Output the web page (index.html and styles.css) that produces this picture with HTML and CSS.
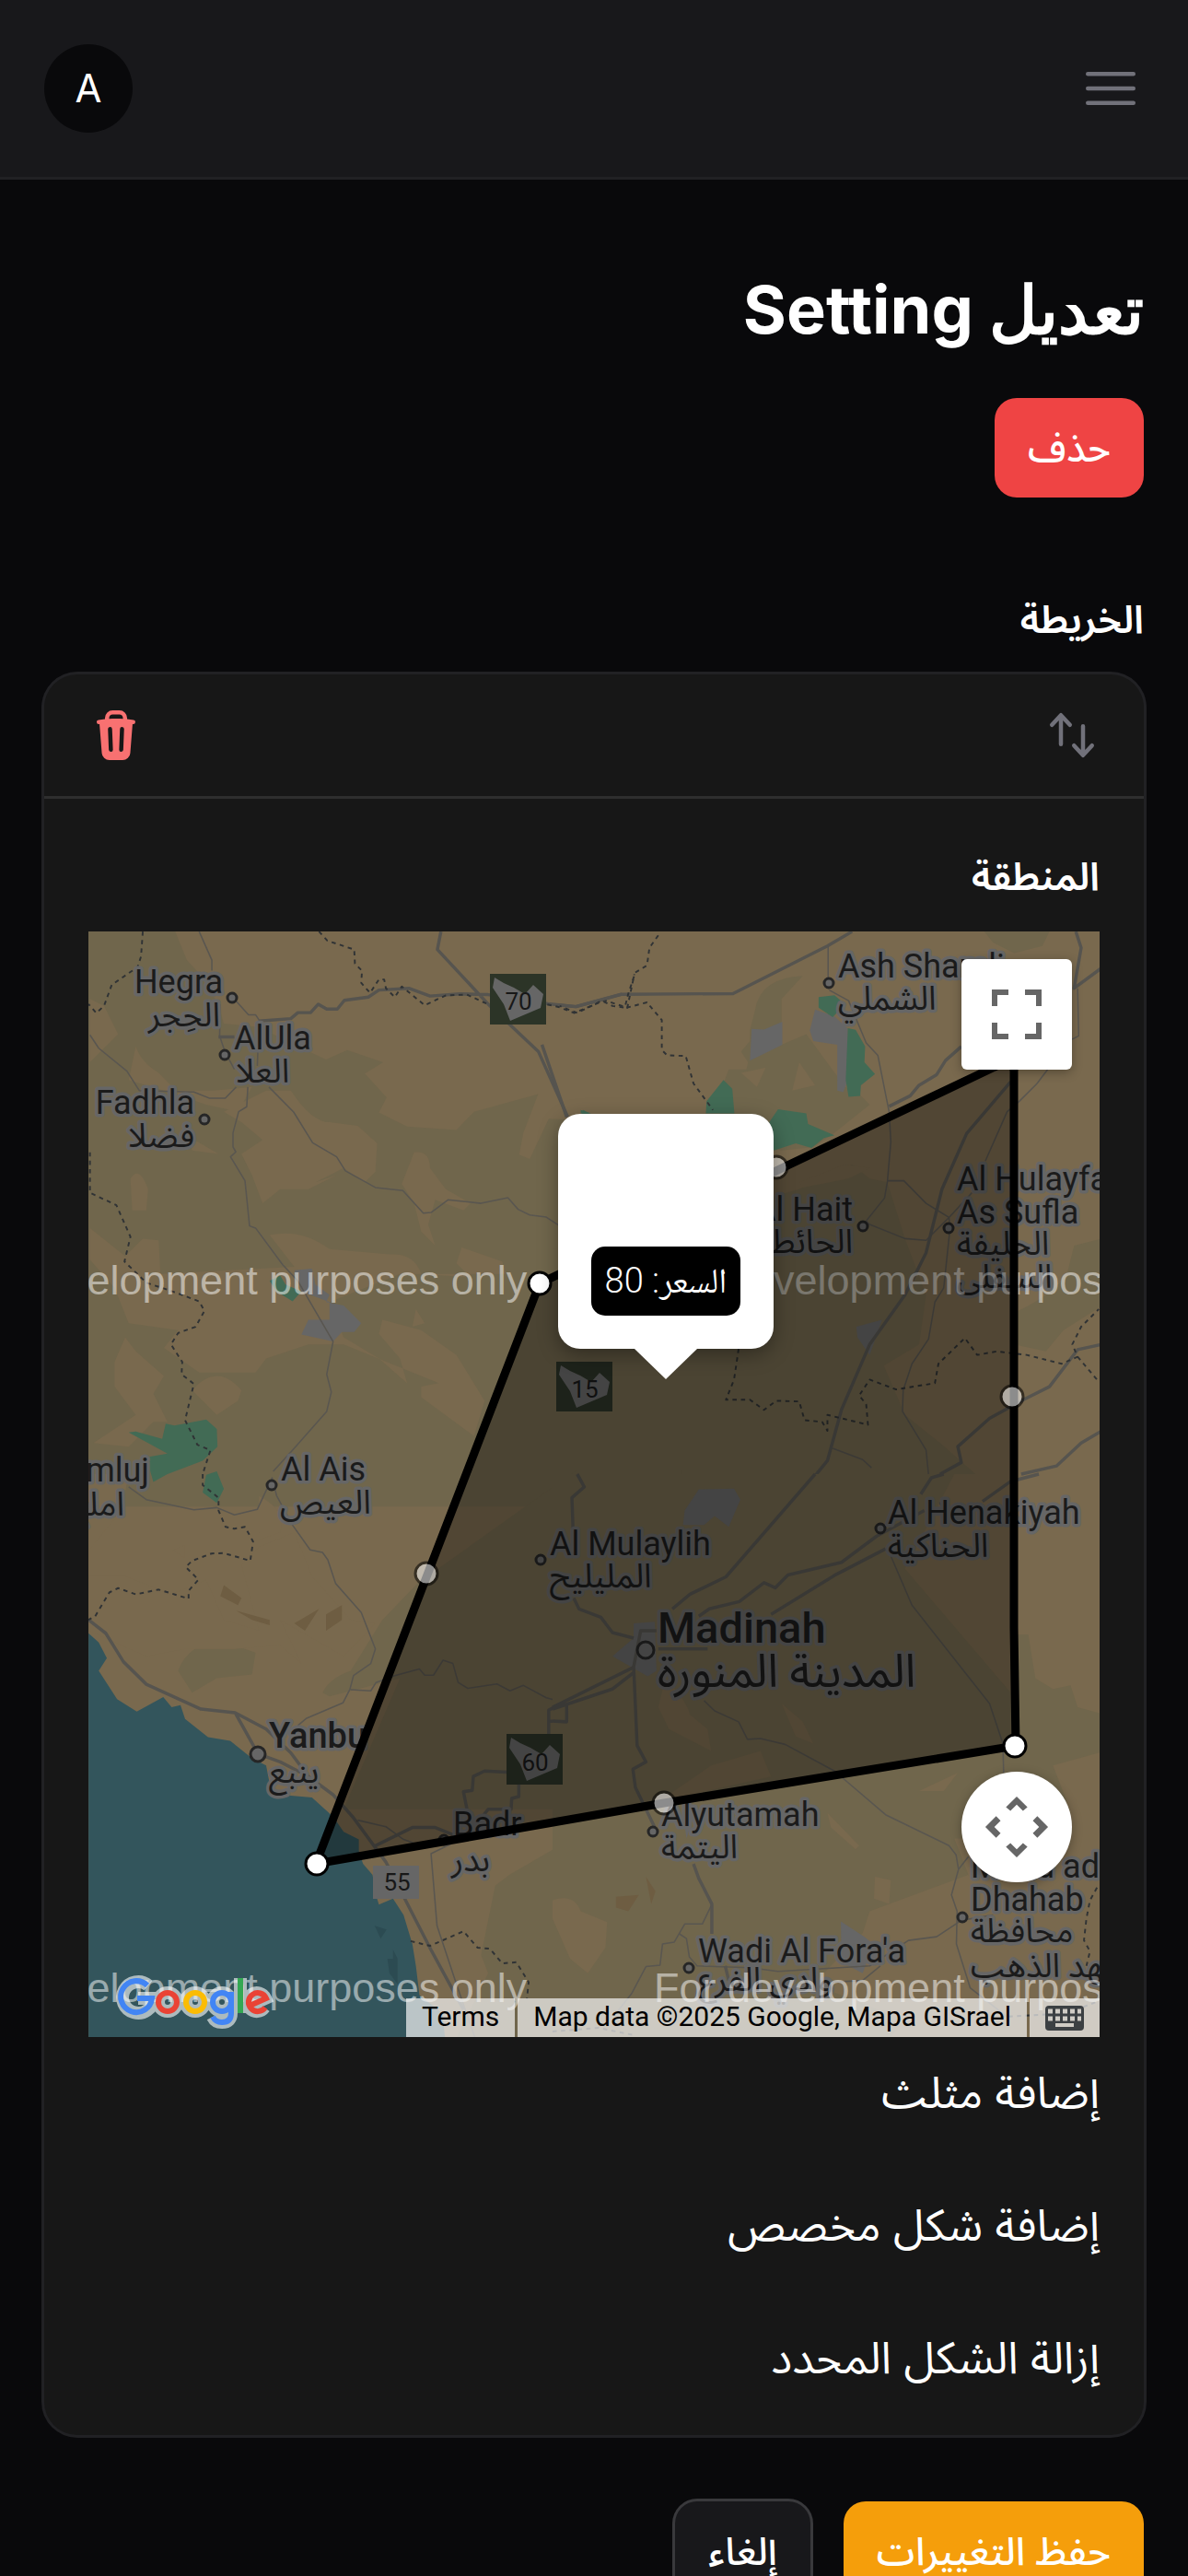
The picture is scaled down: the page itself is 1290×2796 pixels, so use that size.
FILE: index.html
```html
<!DOCTYPE html>
<html lang="ar" dir="rtl">
<head>
<meta charset="utf-8">
<meta name="viewport" content="width=device-width, initial-scale=1">
<title>تعديل Setting</title>
<link rel="stylesheet" href="styles.css">
</head>
<body>
<header class="topbar">
  <button class="icon-button menu-button" type="button" aria-label="القائمة">
    <svg class="icon-lg" viewBox="0 0 24 24" fill="none" stroke="currentColor" stroke-width="1.5" stroke-linecap="round"><path d="M3.75 6.75h16.5M3.75 12h16.5M3.75 17.25h16.5"/></svg>
  </button>
  <button class="avatar" type="button">A</button>
</header>
<main class="page">
  <div class="page-header">
    <h1 class="title">تعديل Setting</h1>
    <button class="btn btn-danger" type="button">حذف</button>
  </div>
  <form class="form">
    <section class="field">
      <h2 class="label">الخريطة</h2>
      <div class="card">
        <div class="card-header">
          <button class="icon-button" type="button" aria-label="نقل">
            <svg class="icon-sm" viewBox="0 0 20 20" fill="currentColor"><path fill-rule="evenodd" d="M2.24 6.8a.75.75 0 0 0 1.06-.04l1.95-2.1v8.59a.75.75 0 0 0 1.5 0V4.66l1.95 2.1a.75.75 0 1 0 1.1-1.02l-3.25-3.5a.75.75 0 0 0-1.1 0L2.2 5.74a.75.75 0 0 0 .04 1.06Zm8 6.4a.75.75 0 0 0-.04 1.06l3.25 3.5a.75.75 0 0 0 1.1 0l3.25-3.5a.75.75 0 1 0-1.1-1.02l-1.95 2.1V6.75a.75.75 0 0 0-1.5 0v8.59l-1.95-2.1a.75.75 0 0 0-1.06-.04Z" clip-rule="evenodd"/></svg>
          </button>
          <button class="icon-button icon-danger" type="button" aria-label="حذف العنصر">
            <svg class="icon-sm" viewBox="0 0 20 20" fill="currentColor"><path fill-rule="evenodd" d="M8.75 1A2.75 2.75 0 0 0 6 3.75v.443c-.795.077-1.584.176-2.365.298a.75.75 0 1 0 .23 1.482l.149-.022.841 10.518A2.75 2.75 0 0 0 7.596 19h4.807a2.75 2.75 0 0 0 2.742-2.53l.841-10.52.149.023a.75.75 0 0 0 .23-1.482A41.03 41.03 0 0 0 14 4.193V3.75A2.75 2.75 0 0 0 11.25 1h-2.5ZM10 4c.84 0 1.673.025 2.5.075V3.75c0-.69-.56-1.25-1.25-1.25h-2.5c-.69 0-1.25.56-1.25 1.25v.325C8.327 4.025 9.16 4 10 4ZM8.58 7.72a.75.75 0 0 0-1.5.06l.3 7.5a.75.75 0 1 0 1.5-.06l-.3-7.5Zm4.34.06a.75.75 0 1 0-1.5-.06l-.3 7.5a.75.75 0 1 0 1.5.06l.3-7.5Z" clip-rule="evenodd"/></svg>
          </button>
        </div>
        <div class="card-body">
          <h3 class="label">المنطقة</h3>
          <div class="map">
            <svg class="map-canvas" viewBox="0 0 1098 1200" preserveAspectRatio="xMidYMid slice" role="img" aria-label="خريطة المدينة المنورة">
              <rect class="sand" width="1098" height="1200"/>
              <!-- north-west -->
              <g transform="translate(-6 -11) scale(.38265)">
                <path class="olive" d="M16 29H262L295 110 350 170 385 240 400 290 500 300 600 350 690 392 750 365 852 400 800 432 862 500 840 542 920 582 1060 592 1110 540 1292 490 1250 600 1238 662 1268 674 1322 560 1500 570V1660H16Z"/>
                <path class="sand" d="M150 355Q165 400 215 430L265 480 370 480 480 470 440 540 350 520 290 500 230 480 130 450ZM20 220 60 240 100 320 20 400ZM590 480Q650 570 700 570L780 580 835 630 830 710 800 740 740 700 660 740 720 720 640 760 560 760 510 800 480 720 450 660 510 620 450 570 400 540 520 480ZM300 610 385 660 310 650ZM940 655Q985 650 985 700L1030 760 1100 800 1080 820 1000 790 980 860 1000 920 960 880 940 800 905 745ZM135 730Q160 690 185 760L180 820 140 820ZM530 890Q620 870 700 930L870 945Q940 940 960 1000L1100 1010 1060 970 1075 925 1190 965 1200 1000 900 1000 700 1080 740 1180 840 1240 920 1310 900 1240 840 1170 850 1130 960 1160 1060 1230 1140 1360 1110 1460 960 1350 960 1320 1010 1310 740 1200 640 1200 520 1240 490 1280 330 1280 230 1210 270 1160 130 1140 90 1040 20 960V870L120 950 170 900 215 905 220 1000 600 980ZM120 1180 90 1250 90 1320 150 1400 30 1480 130 1490 200 1420 240 1420 200 1340 230 1290 150 1220ZM310 1330Q380 1250 450 1330L440 1360 380 1400ZM945 1100 970 1140 935 1150Z"/>
                <path class="urban" d="M600 990 650 985 660 1030 700 1060 690 1080 740 1090 790 1140 770 1165 735 1165 710 1192 620 1172 640 1130 700 1130 700 1080 620 1050Z"/>
                <path class="park" d="M530 1020 560 1005 575 1030 620 1050 595 1078 550 1050ZM130 1450 150 1447 225 1468 235 1425 260 1430 350 1413 380 1440 382 1490 340 1530 240 1568 200 1590 180 1520 240 1510ZM350 1570 380 1560 400 1610 380 1650 340 1620ZM1415 550 1420 535 1445 550Z"/>
                <path class="road-minor" d="M330 29 366 110 366 140M425 215 470 265 490 265 500 280M390 235 388 325 403 370 430 420M500 280 495 410M20 322 45 360 125 425 160 480 315 484 360 502 404 502 435 470M468 470 465 526 442 540 426 600 426 640 434 654 419 668 460 736 473 864 490 870 567 974 610 1020 710 1192 692 1285 705 1335 692 1390 595 1500 540 1560M528 470 598 541 652 628 720 668 745 708 830 755 908 764 966 828 988 826 1036 790 1130 800 1206 784 1235 817 1268 833 1315 839 1400 895"/>
                <path class="road" d="M385 328H430M500 283 590 276 610 259 646 259 668 235 692 249 722 249 742 224 810 215 840 195 925 190 985 212 1070 206 1150 208 1320 234 1400 242 1530 207M1016 29 1006 80 1155 240 1293 370 1376 555M1400 1210 1415 1389 1385 1515 1415 1625 1385 1660 1390 1760"/>
                <path class="border" d="M170 29 165 100 155 130 82 180 60 240 38 260 16 235M670 29 694 55 770 80 772 120 792 140 790 175 815 203 840 165 855 165 860 190 885 215 905 185 970 238 1030 210 1090 208 1160 240M1318 236 1350 243 1395 260 1480 224 1545 245 1565 150M20 655 20 770 95 805 135 895 118 965 180 1025 255 1050 330 1078 345 1105 320 1150 270 1168 250 1200 282 1250 280 1285 315 1312 290 1415 325 1485 362 1500 340 1568"/>
              </g>
              <!-- north-east -->
              <g transform="translate(504 -11) scale(.38265)">
                <path class="olive" d="M710 155Q590 160 575 250L560 310 560 340 535 370 555 400 550 420 500 420 470 500 480 600 650 650 740 640 800 600 900 520 870 490 830 470 720 320 650 350 650 220ZM1225 29H1410L1390 70 1310 90 1250 60ZM500 930 560 800 700 760 850 690 900 730 950 740 1000 900 1060 1060 1040 1200 940 1260 1000 1400 1100 1480 1200 1568H0V930ZM1310 1110Q1420 1060 1460 1000L1480 920 1560 900V1090L1450 1160 1400 1220 1310 1200Z"/>
                <path class="sand" d="M535 430 605 415 580 470ZM700 400 745 465 680 480ZM700 740 830 690 900 700 840 730 710 755Z"/>
                <path class="urban" d="M565 305 600 307 652 285 652 350 560 395ZM745 250 800 270 838 305 838 450 825 485 808 480 808 350 740 340 730 310ZM862 1150 935 1130 900 1230 865 1180Z"/>
                <path class="park" d="M755 215 800 210 830 235 795 272 755 245ZM838 303 860 308 887 355 885 400 915 433 875 465 873 495 840 498 832 450ZM485 450 510 475 516 545 435 545 437 510ZM640 533 720 545 725 575 800 607 770 615 735 643 690 630 628 650 615 570ZM80 535 110 545H80Z"/>
                <path class="road-minor" d="M782 70V160M785 195 840 225 890 345 923 380 955 540 960 625 950 740 942 785 890 850 900 860 1000 900 1060 905 1125 840 1128 870 1110 1040 1085 1080 1067 1185 1020 1255 995 1330 993 1390 1060 1500 1070 1600 1110 1670M950 736 997 736 1060 800 1125 840 1190 770M1405 420 1375 460 1325 510 1290 540 1228 680M1490 190 1493 325 1474 335M795 1495 880 1527 905 1550"/>
                <path class="road" d="M-30 350 40 555M20 238 65 242 195 207 512 205 780 70 850 29M1485 29 1500 75 1480 190 1568 125M955 525 1015 495 1040 465 1090 435 1115 395 1160 355M1300 455 1175 602 1105 760 1060 940 1000 1060 900 1200 820 1385 780 1530 650 1690 492 1875 340 1960M1568 1198 1490 1215 1410 1320 1340 1355 1240 1410 1150 1490 1160 1535 1100 1568M1568 1440 1500 1480 1430 1545 1330 1568"/>
                <path class="border" d="M300 40 275 75 268 125 235 145 215 205 205 245 170 240 140 225 70 260 20 240M210 245 268 230 310 280 310 365 325 380 378 382 400 460 455 535M528 1213 515 1300 492 1357 560 1357 600 1386 635 1360 700 1362 715 1415 765 1420 780 1445 780 1400 895 1428 890 1370 870 1345 900 1300 975 1328 1085 1310 1095 1255 1170 1182 1205 1230 1260 1220 1345 1230 1445 1255 1490 1235 1475 1200 1500 1150 1550 1100M1490 1235 1545 1300"/>
              </g>
              <!-- south-west -->
              <g transform="translate(-6 589) scale(.38265 .3954)">
                <path class="olive" d="M270 540Q300 460 400 460L490 490 480 550 380 560 310 600ZM680 600Q700 560 760 540L850 400 950 300 1400 -10H1700V920H740L900 560 700 610ZM1170 1130 1210 1100 1568 900V1568H1050L1150 1370 1130 1320Z"/>
                <path class="sand" d="M16 0H130L110 100 16 210ZM16 280 120 280 250 330 350 290 400 400 500 430 450 250 500 200 600 160 650 280 760 400 830 410 740 500 560 400 620 520 560 470 430 480 290 480 180 500 16 430ZM500 60Q580 100 560 160L500 180ZM255 210 290 195 290 230ZM1350 1170 1400 1165 1440 1210 1560 1190 1420 1300 1420 1370 1340 1260Z"/>
                <path class="ridge" d="M400 305 450 340 440 360 390 335ZM435 375 530 400 530 415 480 400ZM690 385 735 360 735 400 690 430ZM600 410 670 370 630 430Z"/>
                <path class="sea" d="M16 437 45 462 68 505 45 540 97 618 153 652 228 612 252 640 277 634 290 672 355 722 418 732 480 780 520 800 530 850 560 880 650 888 710 940 740 982 783 1003 783 1035 795 1070 822 1100 830 1150 840 1182 880 1165 910 1210 935 1290 945 1350 955 1430 1020 1480 1030 1568H16Z"/>
                <path class="shoal" d="M828 1240 862 1250 845 1275ZM880 1305 893 1330 893 1400 870 1370 864 1330H880Z"/>
                <path class="road-minor" d="M130 35 180 70 315 98 380 92 430 112 495 97 537 10 550 60 595 140 645 208 680 215 695 235 717 300 790 380 830 480 817 520 768 553 758 590 738 628 635 670 610 690M760 592 817 595 832 572 885 553 955 535 970 552 995 552 1022 511 1050 520 1065 572 1092 588 1175 576 1212 595 1250 580 1315 614 1370 628M780 950 860 968 910 1003 960 1020 1030 1000M1045 1015 988 1042 1005 1240 1060 1400M1060 1400 1120 1568"/>
                <path class="road" d="M16 400 65 437 115 515 180 577 335 645 432 655 520 700 590 765 640 830 710 880 765 940 860 1065 990 1310 1080 1470M432 655 497 768 560 790 620 820M830 1020 935 970 1000 970 1050 990M1395 340 1405 370 1472 395 1500 435 1568 450M1322 714V648L1400 610 1568 515M1372 625 1365 680 1325 678M1370 625 1510 593 1568 560M1237 851V885L1217 890 1215 920H1150L1125 950M1203 818 1140 815 1108 830 1105 868 1080 872 1090 920"/>
                <path class="border" d="M340 0 340 30 385 65 385 100 405 145 430 150 460 145 483 185 475 238 400 217 365 218 310 238 292 255 328 290 300 320 300 342 215 317 150 330 100 313 75 325 35 390 16 400M930 1282 985 1295 1080 1255 1120 1300 1155 1303 1190 1343 1230 1340 1265 1395 1260 1440"/>
              </g>
              <!-- south-east -->
              <g transform="translate(504 589) scale(.38265 .3954)">
                <path class="olive" d="M0 0H1140L1000 260 1300 600V760L1000 800 1320 720V440L1350 440 1370 560 1420 590 1470 580 1490 640 1568 660V760L1420 800 1460 900 1300 1000 1140 1000 1180 1100 900 1200 880 1260 740 1400 1000 1500 940 1568H0Z"/>
                <path class="sand" d="M0 1170Q60 1150 80 1200L155 1230 150 1300 100 1370 50 1330 0 1220ZM320 560Q380 620 390 660L440 700 450 760 330 700 300 640ZM650 630 710 680 740 740 690 720ZM915 1105 960 1115 955 1180 912 1165ZM780 930 870 1020 860 1030 790 970ZM450 800 590 760 620 830 300 900ZM860 1390 980 1400 940 1480 870 1440ZM1040 870 1150 820 1110 870Z"/>
                <path class="ridge" d="M265 1105 292 1145 280 1180ZM180 1160 245 1155 215 1200 180 1190Z"/>
                <path class="urban" d="M375 100 415 42 515 40 533 70 500 145 460 115 430 140 370 140ZM230 410 290 405 295 540 270 555 170 500 230 450ZM818 1228 885 1270 910 1290 880 1370 820 1340ZM370 930 400 940 380 1000Z"/>
                <path class="road-minor" d="M960 225 1020 360 1240 630 1278 740 1280 820M430 622 460 650 528 680 553 728 590 726 660 742 800 815 945 935 1125 1020 1145 1045 1152 1085 1132 1155 1148 1200 1146 1290 1185 1410 1290 1490M1180 1050 1152 1085M450 1185 425 1235 375 1235 345 1285 312 1290 305 1348 265 1352 225 1425 180 1480M360 1262 380 1275 388 1325 410 1350 560 1355 640 1365 900 1350 1010 1280 1090 1270 1160 1225 1250 1210M700 1400 880 1390 930 1350"/>
                <path class="road" d="M70 0 90 35 55 65 58 150M60 340 75 370 137 393 170 435 230 450M340 370 390 330 492 282 745 0M415 390 445 370 530 350 600 298 632 312 668 277 820 242 920 170 1055 100M620 385 800 278 945 205M1220 75 1300 20 1380 0M1045 55 1075 10 1110 0M0 640 230 530M40 630 40 680 0 678M0 645 170 590 230 545M230 525 240 745 265 790 228 810 235 860 290 970M400 1070 415 1110 452 1180V1262M300 480 440 480M230 530 250 430 295 430M490 1350 500 1390"/>
                <path class="border" d="M1545 1135 1525 1170 1515 1220 1508 1280 1525 1310 1515 1350M0 1530 130 1520 230 1540M1270 1490 1460 1480 1540 1450"/>
              </g>
              <!-- road shields -->
              <path class="shield-box" d="M436 46H497V101H436ZM508 467H569V521H508ZM454 871H515V926H454Z"/>
              <path class="shield" d="M441 50 451 56 462 61 474 68 483 58 494 68 491 83 458 97 451 79 439 61ZM513 471 523 477 534 482 546 489 555 479 566 489 563 503 530 517 523 499 511 481ZM459 875 469 881 480 886 492 893 501 883 512 893 509 908 476 922 469 904 457 886ZM309 1014H359V1050H309Z"/>
              <g class="road-number"><text x="467" y="85">70</text><text x="539" y="506">15</text><text x="485" y="911">60</text><text x="335" y="1041">55</text></g>
              <g class="dots"><circle cx="156" cy="72" r="5"/><circle cx="148" cy="134" r="5"/><circle cx="126" cy="204" r="5"/><circle cx="199" cy="601" r="5"/><circle cx="184" cy="893" r="8"/><circle cx="804" cy="56" r="5"/><circle cx="949" cy="1070" r="5"/><circle cx="652" cy="1125" r="5"/><circle cx="613" cy="977" r="5"/><circle cx="491" cy="682" r="5"/><circle cx="605" cy="780" r="9"/><circle cx="860" cy="648" r="5"/><circle cx="841" cy="320" r="5"/><circle cx="934" cy="322" r="5"/><circle cx="386" cy="986" r="5"/></g>
              <g class="places">
                <g class="end">
                  <text x="146" y="67">Hegra</text><text x="143" y="103">الحِجر</text>
                  <text x="115" y="198">Fadhla</text><text x="115" y="234">فضلا</text>
                  <text x="66" y="597">Umluj</text><text x="39" y="634">املج</text>
                  <text x="830" y="314">Al Hait</text><text x="830" y="349">الحائط</text>
                </g>
                <text x="158" y="128">AlUla</text><text x="160" y="164">العلا</text>
                <text x="209" y="596">Al Ais</text><text x="208" y="632">العيص</text>
                <text x="814" y="50">Ash Shamli</text><text x="814" y="85">الشملي</text>
                <text x="196" y="886" class="town">Yanbu</text><text x="196" y="924">ينبع</text>
                <text x="396" y="981">Badr</text><text x="394" y="1020">بدر</text>
                <text x="622" y="971">Alyutamah</text><text x="622" y="1006">اليتمة</text>
                <text x="662" y="1119">Wadi Al Fora'a</text><text x="662" y="1150">وادي الفرع</text>
                <text x="958" y="1027">Mahd ad</text><text x="958" y="1063">Dhahab</text><text x="958" y="1097">محافظة</text><text x="958" y="1135">مهد الذهب</text>
                <text x="943" y="281">Al Hulayfah</text><text x="943" y="317">As Sufla</text><text x="943" y="351">الحليفة</text><text x="943" y="387">السفلى</text>
                <text x="501" y="677">Al Mulaylih</text><text x="501" y="712">المليليح</text>
                <text x="868" y="643">Al Henakiyah</text><text x="868" y="679">الحناكية</text>
                <text x="618" y="772" class="city">Madinah</text><text x="618" y="820" class="city-ar">المدينة المنورة</text>
              </g>
              <g class="watermark"><text x="-154" y="394">For development purposes only</text><text x="614" y="394">For development purposes only</text><text x="-154" y="1162">For development purposes only</text><text x="614" y="1162">For development purposes only</text></g>
              <!-- drawn area -->
              <path class="shape" d="M490 382 1005 137 1005 755 1007 884 625 946 247 1012Z"/>
              <g class="handles"><circle cx="490" cy="382" r="12"/><circle cx="1006" cy="884" r="12"/><circle cx="248" cy="1012" r="12"/></g>
              <g class="handles soft"><circle cx="747" cy="256" r="12"/><circle cx="1003" cy="505" r="12"/><circle cx="625" cy="946" r="12"/><circle cx="367" cy="697" r="12"/></g>
            </svg>
            <div class="info">
              <div class="info-label">السعر: 80</div>
            </div>
            <button class="map-control fullscreen" type="button" aria-label="ملء الشاشة">
              <svg class="glyph-fs" viewBox="0 0 18 18"><path d="M0 0v6h2V2h4V0H0zm16 0h-4v2h4v4h2V0h-2zm0 16h-4v2h6v-6h-2v4zM2 12H0v6h6v-2H2v-4z"/></svg>
            </button>
            <button class="map-control camera" type="button" aria-label="التحكم بالكاميرا">
              <svg class="glyph-cam" viewBox="0 0 72 72"><path d="M36 2 48 14 43 18 36 11 29 18 24 14ZM36 70 48 58 43 54 36 61 29 54 24 58ZM1 36 13 24 18 29 11 36 18 43 13 48ZM71 36 59 24 54 29 61 36 54 43 59 48Z"/></svg>
            </button>
            <a class="logo" href="#" aria-label="Google">
              <svg class="logo-art" viewBox="0 0 180 72">
                <g class="logo-halo"><path d="M40 16A17 17 0 1 0 46 30H29"/><circle cx="61" cy="34" r="10"/><circle cx="91" cy="34" r="10"/><circle cx="120" cy="34" r="10"/><path d="M130 24V46Q130 56 120 56 113 56 110 50M140 8V46M149 38 167 30A10 10 0 1 0 166 40"/></g>
                <g class="logo-line"><path stroke="#4285f4" d="M39 16A17 17 0 1 0 44 30H28"/><circle stroke="#ea4335" cx="61" cy="34" r="10"/><circle stroke="#fbbc04" cx="91" cy="34" r="10"/><circle stroke="#4285f4" cx="120" cy="34" r="10"/><path stroke="#4285f4" d="M130 23V46Q130 56 120 56 113 56 110 50"/><path stroke="#34a853" d="M140 8V46"/><path stroke="#ea4335" d="M150 38 168 30A10 10 0 1 0 167 40"/></g>
              </svg>
            </a>
            <div class="attribution">
              <a class="credit" href="#">Terms</a>
              <span class="credit">Map data ©2025 Google, Mapa GISrael</span>
              <button class="credit keyboard" type="button" aria-label="Keyboard shortcuts">
                <svg class="glyph-kb" viewBox="0 0 42 27"><rect width="42" height="27" rx="4" fill="#3c4043"/><path stroke="#d0ccc5" stroke-width="5" stroke-dasharray="5 3" d="M3 6H39M3 14H39"/><path stroke="#d0ccc5" stroke-width="4" d="M11 21H31"/></svg>
              </button>
            </div>
          </div>
          <div class="shape-actions">
            <button class="text-button" type="button">إضافة مثلث</button>
            <button class="text-button" type="button">إضافة شكل مخصص</button>
            <button class="text-button" type="button">إزالة الشكل المحدد</button>
          </div>
        </div>
      </div>
    </section>
    <div class="form-actions">
      <button class="btn btn-primary" type="submit">حفظ التغييرات</button>
      <button class="btn btn-outline" type="button">إلغاء</button>
    </div>
  </form>
</main>
</body>
</html>
```

FILE: styles.css
```css
*, *::before, *::after { box-sizing: border-box; }
body {
  margin: 0;
  background: #09090b;
  color: #fff;
  font-family: Inter, "Noto Sans Arabic", sans-serif;
  font-size: 48px;
  line-height: 72px;
}
button {
  margin: 0;
  padding: 0;
  border: 0;
  background: none;
  color: inherit;
  font: inherit;
  cursor: pointer;
}
svg { display: block; }
h1, h2, h3 { margin: 0; }

.topbar {
  display: flex;
  align-items: center;
  justify-content: space-between;
  height: 192px;
  padding: 0 48px;
  background: #18181b;
  box-shadow: 0 3px 0 #212124;
}
.icon-button { color: #71717a; }
.icon-danger { color: #f87171; }
.icon-lg { width: 72px; height: 72px; }
.icon-sm { width: 60px; height: 60px; }
.avatar {
  width: 96px;
  height: 96px;
  border-radius: 50%;
  background: #09090b;
  font-size: 42px;
}

.page { padding: 96px 48px; }
.page-header {
  display: flex;
  flex-direction: column;
  align-items: flex-start;
  gap: 48px;
}
.title {
  font-family: Inter, sans-serif;
  font-size: 72px;
  font-weight: 700;
  line-height: 96px;
}
.btn {
  height: 108px;
  padding: 0 36px;
  border-radius: 24px;
  font-size: 42px;
  font-weight: 500;
}
.btn-danger { background: #ef4444; }
.btn-primary { background: #f59e0b; }
.btn-outline { background: #18181b; box-shadow: 0 0 0 3px #39393c; }
.form {
  display: flex;
  flex-direction: column;
  gap: 72px;
  margin-top: 96px;
}
.form-actions { display: flex; gap: 36px; }
.label {
  margin-bottom: 24px;
  font-size: 42px;
  font-weight: 600;
}
.card {
  border-radius: 36px;
  background: #171717;
  box-shadow: 0 0 0 3px #212124;
}
.card-header {
  display: flex;
  align-items: center;
  justify-content: space-between;
  padding: 36px 48px;
}
.card-body { padding: 48px; border-top: 3px solid #2e2e2e; }
.shape-actions {
  display: flex;
  flex-direction: column;
  align-items: flex-start;
  gap: 72px;
  margin-top: 24px;
}

.map {
  position: relative;
  height: 1200px;
  overflow: hidden;
  direction: ltr;
  font-family: Roboto, "Noto Sans Arabic", sans-serif;
}
.map-canvas { width: 100%; height: 100%; }
.sand { fill: #79694e; }
.olive { fill: #70664c; }
.ridge { fill: #6e5d42; }
.urban { fill: #666; }
.park { fill: #426b55; }
.sea { fill: #33555c; }
.shoal { fill: #2c4b52; }
.road, .road-minor, .border { fill: none; stroke-linejoin: round; }
.road { stroke: #56544f; stroke-width: 9; }
.road-minor { stroke: #595650; stroke-width: 4; }
.border { stroke: #303335; stroke-width: 5; stroke-dasharray: 12 12; }
.shape {
  fill: #000;
  fill-opacity: .33;
  stroke: #000;
  stroke-width: 9;
}
.shield-box { fill: #2c3427; }
.shield { fill: #666; }
.road-number { fill: #181818; font-size: 26px; text-anchor: middle; }
.dots { fill: #666; stroke: #262626; stroke-width: 3; }
.places {
  fill: #1b1b1b;
  stroke: #666;
  stroke-width: 7;
  stroke-linejoin: round;
  paint-order: stroke;
  font-size: 36px;
}
.end { text-anchor: end; }
.town { font-size: 38px; font-weight: 500; }
.city { font-size: 47px; font-weight: 500; }
.city-ar { font-size: 50px; }
.watermark {
  fill: #fff;
  fill-opacity: .5;
  font-family: "Liberation Sans", Arial, sans-serif;
  font-size: 45px;
}
.handles { fill: #fff; stroke: #000; stroke-width: 3; }
.handles.soft { opacity: .55; }

.info {
  position: absolute;
  top: 198px;
  left: calc(50% + 78px);
  display: flex;
  align-items: flex-end;
  width: 234px;
  height: 255px;
  padding: 36px;
  border-radius: 24px;
  background: #fff;
  box-shadow: 0 6px 21px rgba(0, 0, 0, .35);
  transform: translateX(-50%);
}
.info::after {
  content: "";
  position: absolute;
  top: 100%;
  left: 83px;
  width: 68px;
  height: 33px;
  background: #fff;
  clip-path: polygon(0 0, 100% 0, 50% 100%);
}
.info-label {
  width: 100%;
  height: 75px;
  border-radius: 15px;
  background: #000;
  font-family: Roboto, "Noto Naskh Arabic", sans-serif;
  font-size: 38px;
  font-weight: 300;
  line-height: 75px;
  text-align: center;
  direction: rtl;
}
.map-control {
  position: absolute;
  right: 30px;
  display: grid;
  place-items: center;
  width: 120px;
  height: 120px;
  background: #fff;
  box-shadow: 0 3px 12px rgba(0, 0, 0, .3);
  fill: #666;
}
.fullscreen { top: 30px; border-radius: 6px; }
.camera { bottom: 168px; border-radius: 50%; }
.glyph-fs { width: 54px; height: 54px; }
.glyph-cam { width: 70px; height: 70px; }
.logo { position: absolute; bottom: 0; left: 25px; }
.logo-art { width: 180px; height: 72px; fill: none; }
.logo-halo { stroke: #fff; stroke-width: 14; opacity: .6; }
.logo-line { stroke-width: 6; }
.attribution {
  position: absolute;
  right: 0;
  bottom: 0;
  display: flex;
  gap: 3px;
  height: 42px;
}
.credit {
  padding: 0 17px;
  background: rgba(245, 245, 245, .7);
  color: #000;
  font-size: 30px;
  line-height: 40px;
  text-decoration: none;
}
.glyph-kb { width: 42px; height: 27px; }
```
